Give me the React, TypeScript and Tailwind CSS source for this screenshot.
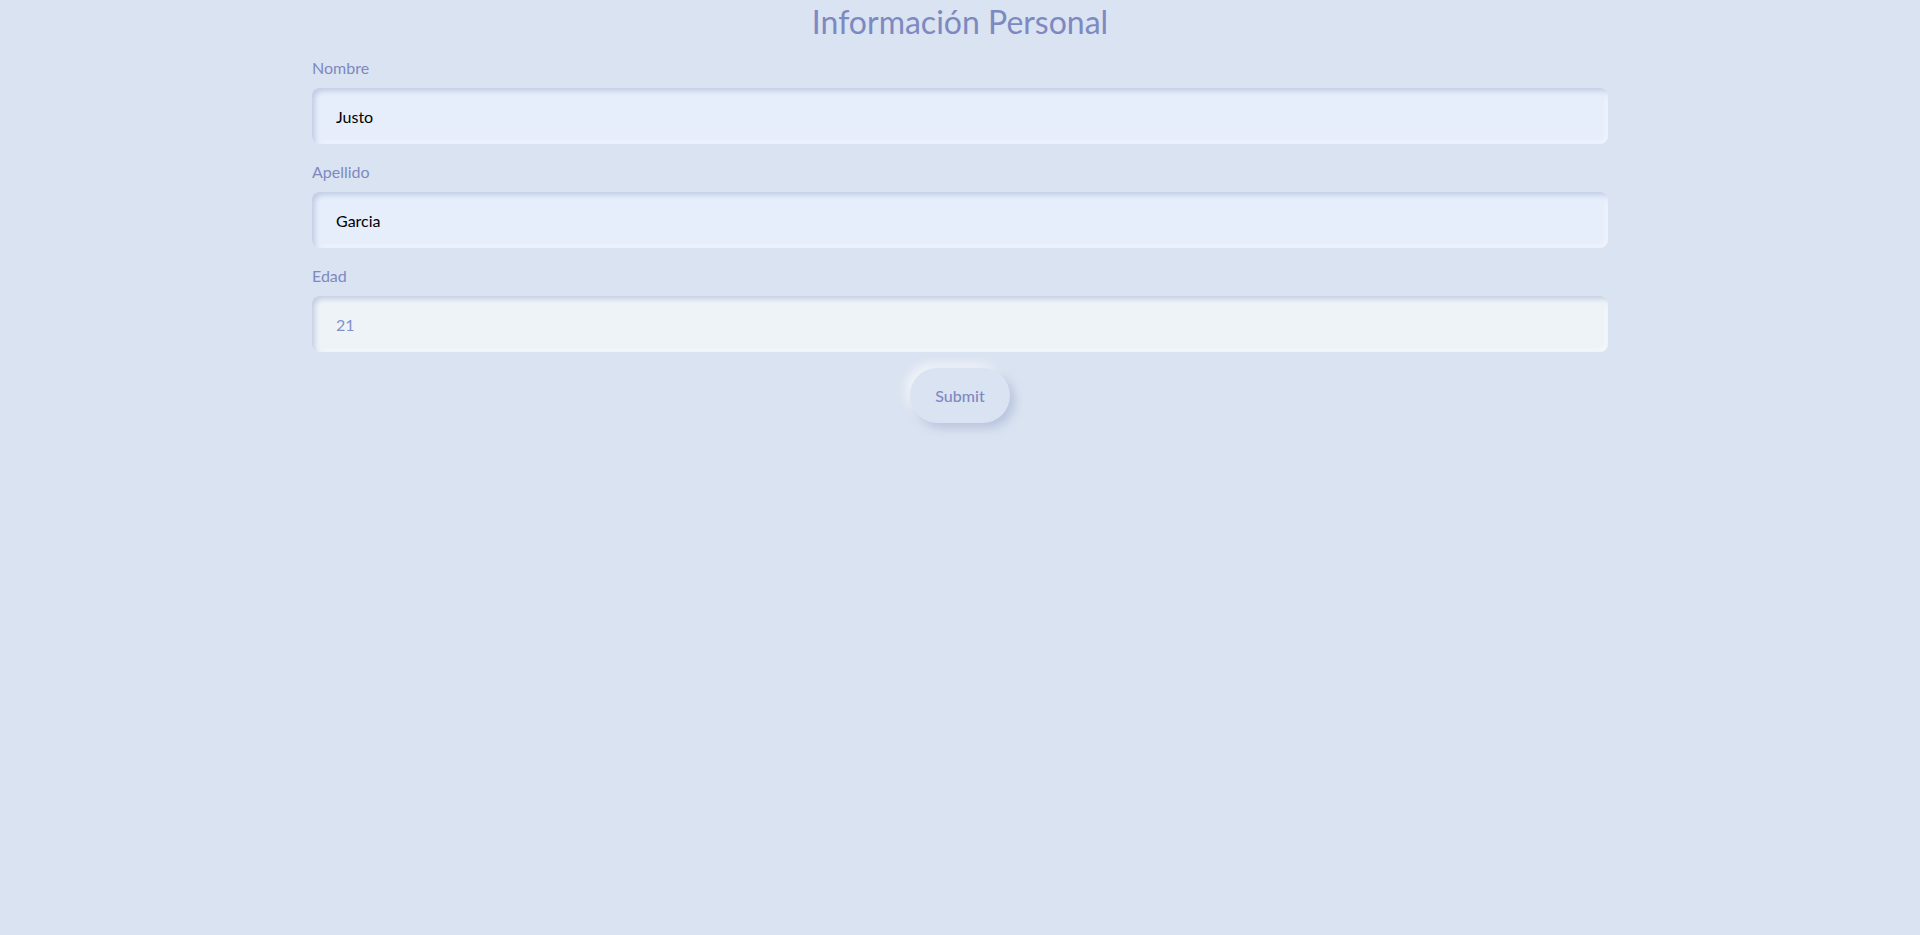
const fields = [
  { label: "Nombre", value: "Justo", disabled: false },
  { label: "Apellido", value: "Garcia", disabled: false },
  { label: "Edad", value: "21", disabled: true },
];

export default function App() {
  return (
    <div
      className="min-h-screen bg-[#dae3f1] text-[#7d89c0]"
      style={{ fontFamily: "Lato, 'Noto Sans', sans-serif" }}
    >
      <div className="mx-auto w-[1296px]">
        <h1 className="text-center text-[32px] leading-[44px] font-normal text-[#7d89c0]">
          Información Personal
        </h1>
        <form className="flex flex-col" onSubmit={(e) => e.preventDefault()}>
          {fields.map((f, i) => (
            <div key={f.label} className="flex flex-col">
              <label
                className={
                  "h-[32px] text-[16px] leading-[22px] pt-[1px] " + (i === 0 ? "mt-[12px]" : "mt-[16px]")
                }
              >
                {f.label}
              </label>
              <input
                defaultValue={f.value}
                disabled={f.disabled}
                className={
                  "h-[56px] w-full rounded-lg px-6 text-[16px] outline-none shadow-[inset_3px_3px_5px_rgba(163,177,210,0.55),inset_-2px_-2px_4px_rgba(255,255,255,0.5)] " +
                  (f.disabled ? "bg-[#eef3f8] text-[#8290c8]" : "bg-[#e6eefc] text-black")
                }
              />
            </div>
          ))}
          <div className="mt-[16px] flex justify-center">
            <button
              type="submit"
              className="h-[55px] w-[100px] rounded-full bg-[#dae3f1] text-[16px] font-medium text-[#7d89c0] shadow-[5px_5px_10px_rgba(163,177,210,0.6),-5px_-5px_10px_rgba(255,255,255,0.6)]"
            >
              Submit
            </button>
          </div>
        </form>
      </div>
    </div>
  );
}
